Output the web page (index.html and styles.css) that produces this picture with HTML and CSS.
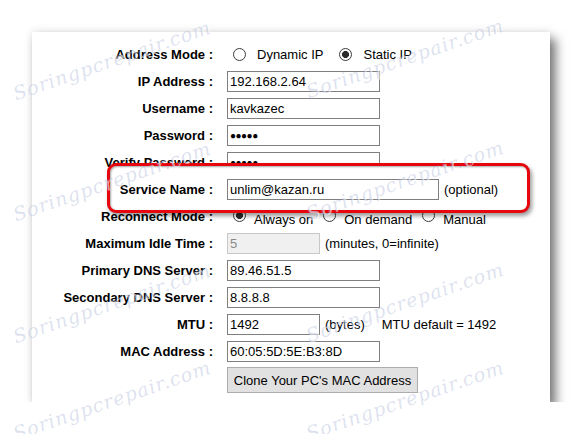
FILE: index.html
```html
<!DOCTYPE html>
<html lang="en">
<head>
  <meta charset="UTF-8" />
  <title>WAN Settings</title>
  <link rel="stylesheet" href="styles.css">
</head>
<body>

  <div class="card">
    <div class="form">
      <div class="label">Address Mode :</div>
      <div class="field">
        <span class="opt"><span class="radio"></span>Dynamic IP</span>
        <span class="opt"><span class="radio on"></span>Static IP</span>
      </div>

      <div class="label">IP Address :</div>
      <div class="field"><input class="box" value="192.168.2.64"></div>

      <div class="label">Username :</div>
      <div class="field"><input class="box" value="kavkazec"></div>

      <div class="label">Password :</div>
      <div class="field"><input class="box pw" value="●●●●●"></div>

      <div class="label">Verify Password :</div>
      <div class="field"><input class="box pw" value="●●●●●"></div>

      <!-- highlighted row, sits above the callout frame -->
      <div class="label hl">Service Name :</div>
      <div class="field hl"><input class="box wide" value="unlim@kazan.ru"><span class="note">(optional)</span></div>

      <div class="label">Reconnect Mode :</div>
      <div class="field low">
        <span class="opt"><span class="radio on"></span>Always on</span>
        <span class="opt"><span class="radio"></span>On demand</span>
        <span class="opt"><span class="radio"></span>Manual</span>
      </div>

      <div class="label">Maximum Idle Time :</div>
      <div class="field"><input class="box short off" value="5" disabled><span class="note">(minutes, 0=infinite)</span></div>

      <div class="label">Primary DNS Server :</div>
      <div class="field"><input class="box" value="89.46.51.5"></div>

      <div class="label">Secondary DNS Server :</div>
      <div class="field"><input class="box" value="8.8.8.8"></div>

      <div class="label">MTU :</div>
      <div class="field"><input class="box short" value="1492"><span class="note">(bytes)</span><span class="note far">MTU default = 1492</span></div>

      <div class="label">MAC Address :</div>
      <div class="field"><input class="box" value="60:05:5D:5E:B3:8D"></div>

      <div class="label"></div>
      <div class="field"><button class="btn">Clone Your PC's MAC Address</button></div>
    </div>

    <div class="callout"></div>
  </div>

  <div class="watermarks">
    <span class="wm" style="left:112px; top:60px">Soringpcrepair.com</span>
    <span class="wm" style="left:405px; top:58px">Soringpcrepair.com</span>
    <span class="wm" style="left:112px; top:181px">Soringpcrepair.com</span>
    <span class="wm" style="left:405px; top:180px">Soringpcrepair.com</span>
    <span class="wm" style="left:112px; top:303px">Soringpcrepair.com</span>
    <span class="wm" style="left:405px; top:302px">Soringpcrepair.com</span>
    <span class="wm" style="left:112px; top:400px">Soringpcrepair.com</span>
    <span class="wm" style="left:405px; top:400px">Soringpcrepair.com</span>
  </div>

</body>
</html>
```

FILE: styles.css
```css
body {
  margin: 0;
  background: #fff;
  font-family: "Liberation Sans", Arial, sans-serif;
  font-size: 13px;
  color: #000;
}
.card {
  position: relative;
  width: 518px;
  margin: 32px 0 0 32px;
  background: #fff;
  box-shadow: 6px 7px 10px rgba(0, 0, 0, 0.5), 0 0 8px rgba(0, 0, 0, 0.12);
}
.form {
  display: grid;
  grid-template-columns: 181px 1fr;
  grid-template-rows: repeat(12, 27px) 30px;
  column-gap: 14px;
  align-items: center;
  padding: 9px 0 7px;
}
.label {
  text-align: right;
  font-weight: bold;
  white-space: nowrap;
}
.field {
  display: flex;
  align-items: center;
  white-space: nowrap;
}
.hl {
  position: relative;
  z-index: 2;
}
.box {
  box-sizing: border-box;
  width: 153px;
  height: 21px;
  margin: 0;
  padding: 0 2px;
  border: 1px solid #7f7f7f;
  font-family: "Liberation Sans", Arial, sans-serif;
  font-size: 13px;
  color: #000;
  background: #fff;
}
.box.wide {
  width: 212px;
}
.box.short {
  width: 93px;
}
.box.off {
  background: #f0f0f0;
  border-color: #c8c8c8;
  color: #8a8a8a;
}
.box.pw {
  font-size: 10px;
  letter-spacing: -0.5px;
}
.note {
  margin-left: 5px;
}
.note.far {
  margin-left: 17px;
}
.opt {
  display: flex;
  align-items: center;
  margin-right: 10px;
}
.radio {
  box-sizing: border-box;
  width: 13px;
  height: 13px;
  margin: 0 11px 0 6px;
  border: 1px solid #3c3c3c;
  border-radius: 50%;
  background: #fff;
}
.radio.on {
  background: radial-gradient(circle, #2b2b2b 0 3.2px, #fff 3.8px);
}
.field.low .opt {
  margin-right: 4px;
  padding-top: 6px;
}
.field.low .radio {
  margin: -8px 8px 0 6px;
}
.btn {
  box-sizing: border-box;
  width: 191px;
  height: 26px;
  margin: 0;
  padding: 0;
  background: #e1e1e1;
  border: 1px solid #adadad;
  font-family: "Liberation Sans", Arial, sans-serif;
  font-size: 13px;
  color: #000;
}
.callout {
  position: absolute;
  z-index: 1;
  left: 75px;
  top: 131px;
  width: 423px;
  height: 50px;
  box-sizing: border-box;
  border: 3px solid #e5060e;
  border-radius: 9px;
  background: #fff;
  box-shadow: inset 1px 1px 2px rgba(0, 0, 0, 0.35), 2px 3px 4px rgba(0, 0, 0, 0.4);
}
.watermarks {
  position: absolute;
  left: 0;
  top: 0;
  width: 582px;
  height: 434px;
  overflow: hidden;
  pointer-events: none;
  z-index: 5;
}
.wm {
  position: absolute;
  transform: translate(-50%, -50%) rotate(-19deg);
  font-family: "DejaVu Serif", serif;
  font-style: italic;
  font-size: 19px;
  letter-spacing: 1px;
  white-space: nowrap;
  color: rgba(150, 165, 205, 0.32);
  text-shadow: 1px 1px 0 rgba(255, 255, 255, 0.6);
}
```
